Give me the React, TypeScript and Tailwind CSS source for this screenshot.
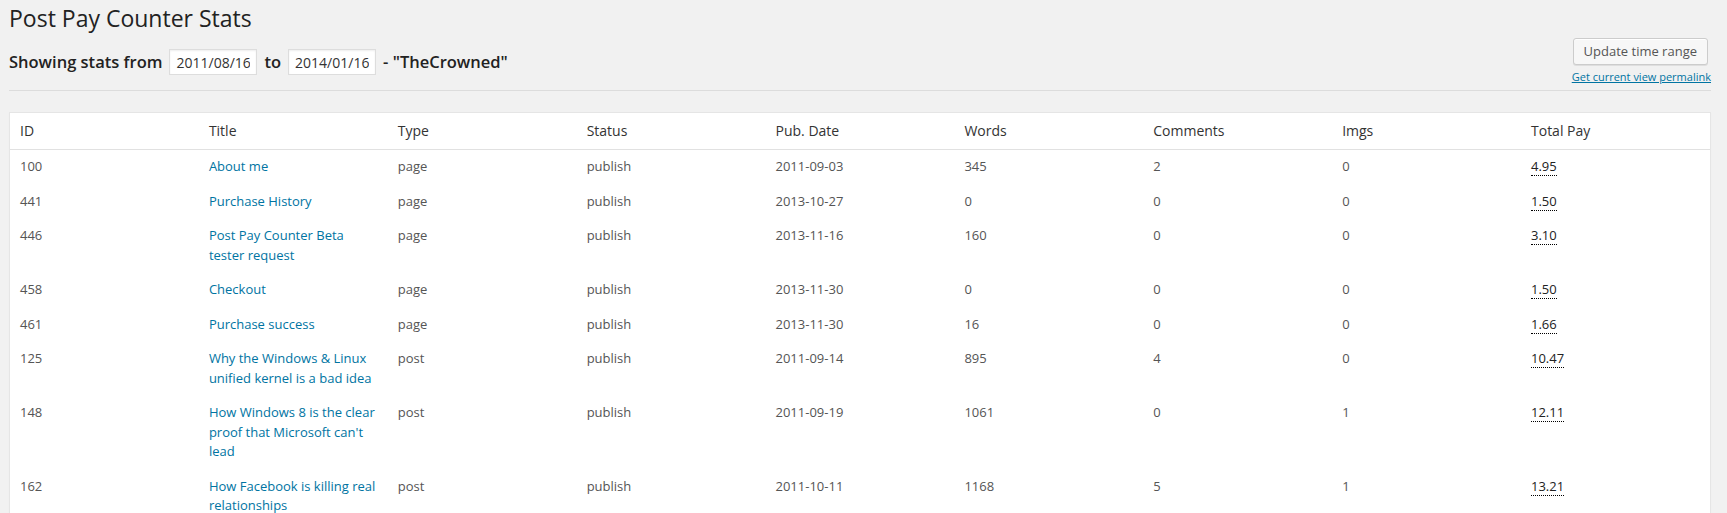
import React from 'react';

type Row = {
  id: number;
  title: string;
  type: string;
  status: string;
  date: string;
  words: number;
  comments: number;
  imgs: number;
  pay: string;
};

const rows: Row[] = [
  { id: 100, title: 'About me', type: 'page', status: 'publish', date: '2011-09-03', words: 345, comments: 2, imgs: 0, pay: '4.95' },
  { id: 441, title: 'Purchase History', type: 'page', status: 'publish', date: '2013-10-27', words: 0, comments: 0, imgs: 0, pay: '1.50' },
  { id: 446, title: 'Post Pay Counter Beta tester request', type: 'page', status: 'publish', date: '2013-11-16', words: 160, comments: 0, imgs: 0, pay: '3.10' },
  { id: 458, title: 'Checkout', type: 'page', status: 'publish', date: '2013-11-30', words: 0, comments: 0, imgs: 0, pay: '1.50' },
  { id: 461, title: 'Purchase success', type: 'page', status: 'publish', date: '2013-11-30', words: 16, comments: 0, imgs: 0, pay: '1.66' },
  { id: 125, title: 'Why the Windows & Linux unified kernel is a bad idea', type: 'post', status: 'publish', date: '2011-09-14', words: 895, comments: 4, imgs: 0, pay: '10.47' },
  { id: 148, title: "How Windows 8 is the clear proof that Microsoft can't lead", type: 'post', status: 'publish', date: '2011-09-19', words: 1061, comments: 0, imgs: 1, pay: '12.11' },
  { id: 162, title: 'How Facebook is killing real relationships', type: 'post', status: 'publish', date: '2011-10-11', words: 1168, comments: 5, imgs: 1, pay: '13.21' },
];

const columns = ['ID', 'Title', 'Type', 'Status', 'Pub. Date', 'Words', 'Comments', 'Imgs', 'Total Pay'];

const DateInput: React.FC<{ value: string }> = ({ value }) => (
  <input
    type="text"
    defaultValue={value}
    className="w-[88px] h-[26px] px-[6px] bg-white border border-[#dddddd] shadow-[inset_0_1px_2px_rgba(0,0,0,0.07)] text-[14px] font-normal text-[#333333] outline-none"
  />
);

export default function App() {
  return (
    <div className="min-h-screen bg-[#f1f1f1] font-['Open_Sans','Liberation_Sans',sans-serif] text-[#444444] pl-[9px] pr-[16px] pb-6">
      {/* Header */}
      <div className="flex items-start justify-between">
        <div>
          <h2 className="mt-[4px] text-[23px] leading-[29px] font-normal text-[#222222]">
            Post Pay Counter Stats
          </h2>
          <div className="mt-[16px] h-[26px] flex items-center gap-[7px] text-[16.5px] font-semibold text-[#222222]">
            <span>Showing stats from</span>
            <DateInput value="2011/08/16" />
            <span>to</span>
            <DateInput value="2014/01/16" />
            <span>- "TheCrowned"</span>
          </div>
        </div>

        <div className="mt-[38px] flex flex-col items-end">
          <button className="mr-[3px] h-[27px] px-[10px] leading-[25px] text-[13px] text-[#555555] bg-[#f7f7f7] border border-[#cccccc] rounded-[3px] shadow-[inset_0_1px_0_#fff,0_1px_0_rgba(0,0,0,0.08)]">
            Update time range
          </button>
          <a href="#" className="mt-[4px] text-[11px] leading-[15px] text-[#0074a2] underline">
            Get current view permalink
          </a>
        </div>
      </div>

      <div className="mt-[6px] border-t border-[#dcdcdc]" />

      {/* Stats table */}
      <table className="mt-[21px] w-full table-fixed bg-white border border-[#e5e5e5] shadow-[0_1px_1px_rgba(0,0,0,0.04)] border-separate border-spacing-0">
        <thead>
          <tr>
            {columns.map((c) => (
              <th
                key={c}
                className="text-left font-normal text-[14px] leading-[19.6px] text-[#333333] px-[10px] py-[8px] border-b border-[#e1e1e1]"
              >
                {c}
              </th>
            ))}
          </tr>
        </thead>
        <tbody>
          {rows.map((r) => (
            <tr key={r.id} className="align-top text-[13px] leading-[19.5px] text-[#555555]">
              <td className="px-[10px] py-[7.5px]">{r.id}</td>
              <td className="px-[10px] py-[7.5px]">
                <a href="#" className="text-[#0074a2]">
                  {r.title}
                </a>
              </td>
              <td className="px-[10px] py-[7.5px]">{r.type}</td>
              <td className="px-[10px] py-[7.5px]">{r.status}</td>
              <td className="px-[10px] py-[7.5px]">{r.date}</td>
              <td className="px-[10px] py-[7.5px]">{r.words}</td>
              <td className="px-[10px] py-[7.5px]">{r.comments}</td>
              <td className="px-[10px] py-[7.5px]">{r.imgs}</td>
              <td className="px-[10px] py-[7.5px]">
                <abbr title={`${r.pay}`} className="no-underline text-[#222222] border-b border-dotted border-black">
                  {r.pay}
                </abbr>
              </td>
            </tr>
          ))}
        </tbody>
      </table>
    </div>
  );
}
